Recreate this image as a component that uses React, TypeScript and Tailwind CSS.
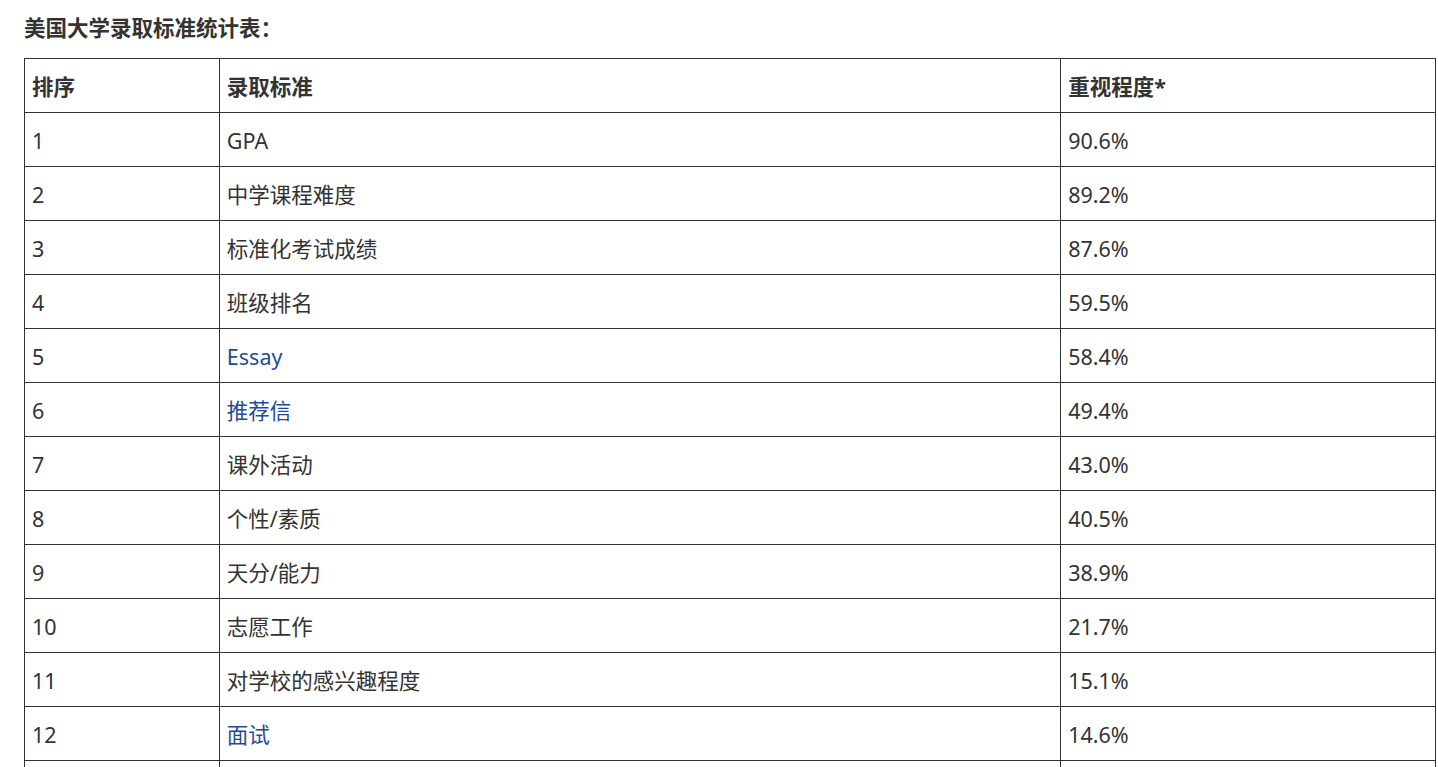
const rows: { n: number; name: string; pct: string; link?: boolean }[] = [
  { n: 1, name: 'GPA', pct: '90.6%' },
  { n: 2, name: '中学课程难度', pct: '89.2%' },
  { n: 3, name: '标准化考试成绩', pct: '87.6%' },
  { n: 4, name: '班级排名', pct: '59.5%' },
  { n: 5, name: 'Essay', pct: '58.4%', link: true },
  { n: 6, name: '推荐信', pct: '49.4%', link: true },
  { n: 7, name: '课外活动', pct: '43.0%' },
  { n: 8, name: '个性/素质', pct: '40.5%' },
  { n: 9, name: '天分/能力', pct: '38.9%' },
  { n: 10, name: '志愿工作', pct: '21.7%' },
  { n: 11, name: '对学校的感兴趣程度', pct: '15.1%' },
  { n: 12, name: '面试', pct: '14.6%', link: true },
]

const cell = 'border border-[#333] h-[54px] px-[7px] pt-[3px] align-middle'

export default function App() {
  return (
    <div
      className="bg-white text-[#333] h-screen overflow-hidden"
      style={{ fontFamily: '"Noto Sans", "Noto Sans CJK SC", sans-serif' }}
    >
      <div className="pl-[24px] pt-[13px]">
        <h2 className="text-[21.5px] font-bold leading-[30px] mb-[15px]">美国大学录取标准统计表：</h2>
        <table className="border-collapse w-[1412px] text-[21.5px] leading-[28px]">
          <colgroup>
            <col className="w-[195px]" />
            <col className="w-[842px]" />
            <col className="w-[375px]" />
          </colgroup>
          <thead>
            <tr className="font-bold text-left">
              <th className={cell}>排序</th>
              <th className={cell}>录取标准</th>
              <th className={cell}>重视程度*</th>
            </tr>
          </thead>
          <tbody>
            {rows.map((r) => (
              <tr key={r.n}>
                <td className={cell}>{r.n}</td>
                <td className={cell}>
                  {r.link ? <a className="text-[#1c4b9c]">{r.name}</a> : r.name}
                </td>
                <td className={cell}>{r.pct}</td>
              </tr>
            ))}
            <tr>
              <td className={cell}></td>
              <td className={cell}></td>
              <td className={cell}></td>
            </tr>
          </tbody>
        </table>
      </div>
    </div>
  )
}
